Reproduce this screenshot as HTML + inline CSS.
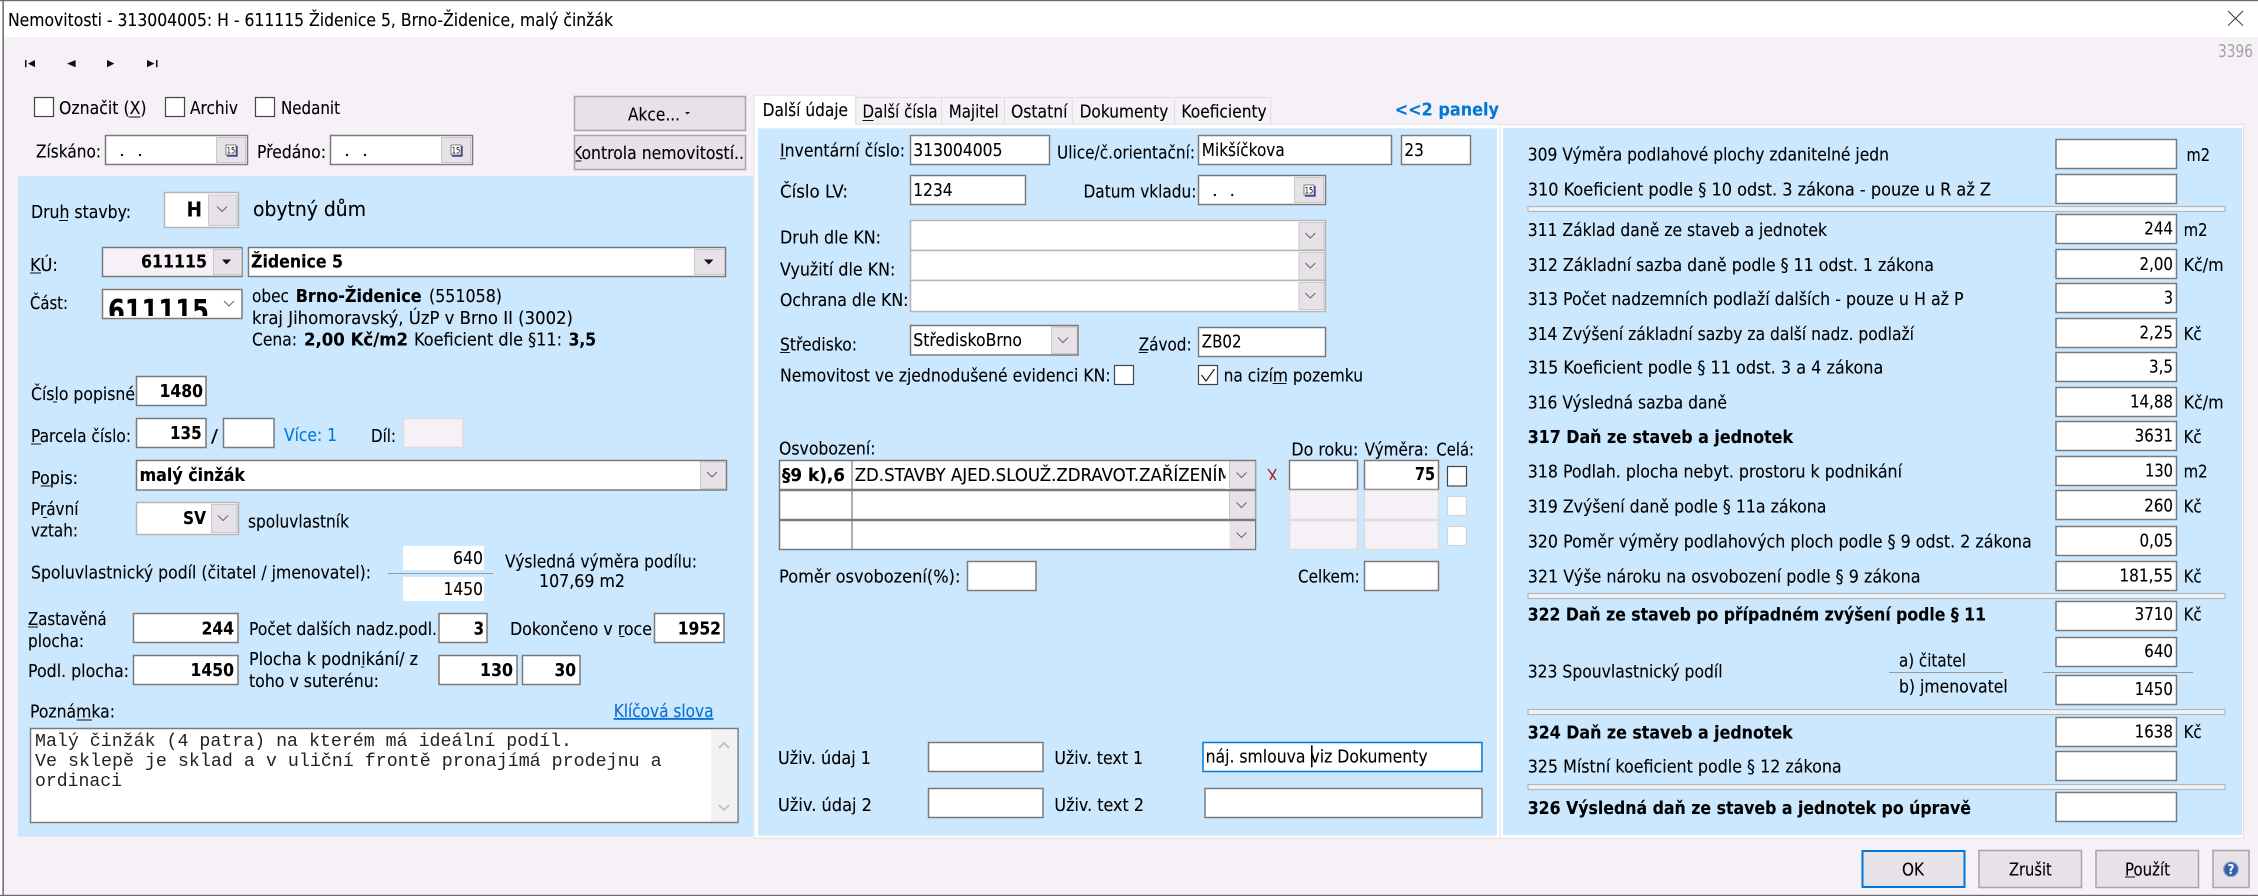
<!DOCTYPE html>
<html lang="cs">
<head>
<meta charset="utf-8">
<title>Nemovitosti</title>
<style>
html,body{margin:0;padding:0;width:2258px;height:896px;overflow:hidden;background:#f5f1f6}
svg{display:block}
text{font-family:"DejaVu Sans","Liberation Sans",sans-serif;font-size:17.5px;fill:#000;stroke:#000;stroke-width:.12}
.B{font-weight:bold}
.L{fill:#0078d7;stroke:#0078d7}
.M{font-family:"Liberation Mono",monospace;font-size:18px;fill:#222;stroke:none}
.i{fill:#fff;stroke:#7a7a7a;stroke-width:1.5}
.li{fill:#fff;stroke:#b4b4b4;stroke-width:1.5}
.d{fill:#f5f1f6;stroke:#dcdcdc;stroke-width:1.5}
.dk{fill:#f5f1f6;stroke:#7a7a7a;stroke-width:1.5}
.c{fill:#fff;stroke:#444;stroke-width:1.2}
.dc{fill:#fff;stroke:#d4d4d4;stroke-width:1.2}
.b{fill:#e6e2e8;stroke:#c8c8c8;stroke-width:1}
.bb{fill:#e6e2e8;stroke:#a6a6a6;stroke-width:1.5}
.ch{fill:none;stroke:#666;stroke-width:1}
.u{fill:#111}
.s{fill:#eef3f8;stroke:#aeb8c2;stroke-width:1.2}
.cal{fill:#fff;stroke:#333;stroke-width:.6}
.n{font-size:8.5px;stroke:none}
</style>
</head>
<body>
<svg xmlns="http://www.w3.org/2000/svg" width="2258" height="896" viewBox="0 0 2258 896">
<defs>
<clipPath id="cp"><rect x="103" y="290" width="110" height="26"/></clipPath>
<clipPath id="ck"><rect x="575.5" y="136" width="169.5" height="33"/></clipPath>
</defs>
<rect width="2258" height="896" fill="#f5f1f6"/>
<!-- title bar -->
<rect width="2258" height="37" fill="#fff"/>
<rect width="2.4" height="896" fill="#fff"/>
<rect width="2258" height="1.2" fill="#6a6a6a"/>
<rect x="2.4" width="1.5" height="896" fill="#6a6a6a"/>
<rect y="894.8" width="2258" height="1.2" fill="#6a6a6a"/>
<text x="8" y="26" textLength="605" lengthAdjust="spacingAndGlyphs">Nemovitosti - 313004005: H - 611115 Židenice 5, Brno-Židenice, malý činžák</text>
<path d="M2228 11L2243 25.7M2243 11L2228 25.7" stroke="#333" stroke-width="1" fill="none"/>
<text x="2218" y="57" textLength="35" lengthAdjust="spacingAndGlyphs" style="fill:#a4a4a4;stroke:none">3396</text>
<!-- nav -->
<path d="M25 60h1.5v7.3H25zM35 60v7.3l-7-3.65zM75.6 60v7.3l-8.5-3.65zM107 60v7.3l7.4-3.65zM147 60v7.3l7.5-3.65zM156 60h1.5v7.3H156z" fill="#111"/>
<!-- top left -->
<rect class="c" x="34.5" y="97.5" width="19" height="19"/>
<text x="59" y="114" textLength="87.5" lengthAdjust="spacingAndGlyphs">Označit (X)</text>
<rect class="u" x="128.5" y="116.5" width="12" height="1"/>
<rect class="c" x="165.5" y="97.5" width="19" height="19"/>
<text x="190" y="114" textLength="48" lengthAdjust="spacingAndGlyphs">Archiv</text>
<rect class="c" x="255.5" y="97.5" width="19" height="19"/>
<text x="281" y="114" textLength="59" lengthAdjust="spacingAndGlyphs">Nedanit</text>
<text x="36" y="157.3" textLength="65" lengthAdjust="spacingAndGlyphs">Získáno:</text>
<rect class="i" x="105.5" y="135.5" width="142" height="29"/>
<rect class="b" x="216.5" y="137.5" width="29" height="25"/>
<rect class="cal" x="226" y="145" width="10" height="10"/><path d="M237 146v10h-10" stroke="#2a2a90" stroke-width="1.2" fill="none"/><text class="n" x="226.8" y="153.5" textLength="8.4" lengthAdjust="spacingAndGlyphs">15</text>
<circle cx="122" cy="155" r="1.2" fill="#111"/><circle cx="140" cy="155" r="1.2" fill="#111"/>
<text x="257" y="158" textLength="69" lengthAdjust="spacingAndGlyphs">Předáno:</text>
<rect class="i" x="330.5" y="135.5" width="142" height="29"/>
<rect class="b" x="441.5" y="137.5" width="29" height="25"/>
<rect class="cal" x="451" y="145" width="10" height="10"/><path d="M462 146v10h-10" stroke="#2a2a90" stroke-width="1.2" fill="none"/><text class="n" x="451.8" y="153.5" textLength="8.4" lengthAdjust="spacingAndGlyphs">15</text>
<circle cx="347" cy="155" r="1.2" fill="#111"/><circle cx="365" cy="155" r="1.2" fill="#111"/>
<rect class="bb" x="574.5" y="96.5" width="171" height="34"/>
<text x="628" y="120.7" textLength="52" lengthAdjust="spacingAndGlyphs">Akce...</text>
<path d="M685 112h5l-2.5 2.5z" fill="#111"/>
<rect class="bb" x="574.5" y="135.5" width="171" height="34"/>
<text x="572" y="159" textLength="172" lengthAdjust="spacingAndGlyphs" clip-path="url(#ck)">Kontrola nemovitostí..</text>
<rect class="u" x="575.5" y="160.5" width="6" height="1"/>

<!-- left panel -->
<rect x="18" y="176" width="735" height="660.7" fill="#cce8ff"/>
<text x="31" y="218" textLength="100" lengthAdjust="spacingAndGlyphs">Druh stavby:</text>
<rect class="u" x="59" y="220" width="9" height="1"/>
<rect class="li" x="164.5" y="192.5" width="74" height="35"/>
<rect class="b" x="208.5" y="195" width="28.5" height="30.5"/>
<text class="B" x="186.6" y="216.7" textLength="15.4" lengthAdjust="spacingAndGlyphs" style="font-size:20px">H</text>
<path class="ch" d="M217 206.5l5 5 5-5"/>
<text x="253" y="216" textLength="113" lengthAdjust="spacingAndGlyphs" style="font-size:20px">obytný dům</text>

<text x="30" y="271" textLength="28" lengthAdjust="spacingAndGlyphs">KÚ:</text>
<rect class="u" x="30" y="272.5" width="11" height="1"/>
<rect class="dk" x="102.5" y="247.5" width="139.5" height="29"/>
<text class="B" x="141" y="267.7" textLength="66" lengthAdjust="spacingAndGlyphs">611115</text>
<rect class="b" x="213.5" y="249.5" width="28" height="25"/>
<path d="M222 259.5h9l-4.5 5z" fill="#111"/>
<rect class="i" x="248.5" y="247.5" width="477" height="29"/>
<text class="B" x="251" y="267.7" textLength="92" lengthAdjust="spacingAndGlyphs">Židenice 5</text>
<rect class="b" x="694.5" y="249.5" width="30" height="25"/>
<path d="M704 259.5h9.5l-4.75 5z" fill="#111"/>

<text x="30" y="309" textLength="38" lengthAdjust="spacingAndGlyphs">Část:</text>
<rect class="li" x="102.5" y="289.5" width="139.5" height="29" style="stroke:#7a7a7a"/>
<text class="B" x="108" y="321" textLength="101" lengthAdjust="spacingAndGlyphs" clip-path="url(#cp)" style="font-size:30px">611115</text>
<path class="ch" d="M224 301l5 5 5-5"/>
<text x="252" y="302" textLength="37" lengthAdjust="spacingAndGlyphs">obec</text>
<text class="B" x="295.7" y="302" textLength="126" lengthAdjust="spacingAndGlyphs">Brno-Židenice</text>
<text x="429" y="302" textLength="73" lengthAdjust="spacingAndGlyphs">(551058)</text>
<text x="252" y="324" textLength="321" lengthAdjust="spacingAndGlyphs">kraj Jihomoravský, ÚzP v Brno II (3002)</text>
<text x="252" y="345.7" textLength="45" lengthAdjust="spacingAndGlyphs">Cena:</text>
<text class="B" x="304" y="345.7" textLength="104" lengthAdjust="spacingAndGlyphs">2,00 Kč/m2</text>
<text x="414" y="345.7" textLength="148" lengthAdjust="spacingAndGlyphs">Koeficient dle §11:</text>
<text class="B" x="568.6" y="345.7" textLength="27.5" lengthAdjust="spacingAndGlyphs">3,5</text>

<text x="31" y="400" textLength="104" lengthAdjust="spacingAndGlyphs">Číslo popisné</text>
<rect class="u" x="53" y="401.5" width="4" height="1"/>
<rect class="i" x="136.5" y="376.5" width="69.5" height="29"/>
<text class="B" x="159.5" y="397" textLength="43.5" lengthAdjust="spacingAndGlyphs">1480</text>

<text x="31" y="442" textLength="100" lengthAdjust="spacingAndGlyphs">Parcela číslo:</text>
<rect class="u" x="31" y="443.5" width="10" height="1"/>
<rect class="i" x="136.5" y="418.5" width="69.5" height="29"/>
<text class="B" x="170" y="439" textLength="31.6" lengthAdjust="spacingAndGlyphs">135</text>
<text x="211" y="442" textLength="7" lengthAdjust="spacingAndGlyphs">/</text>
<rect class="i" x="223.5" y="418.5" width="50.5" height="29"/>
<text class="L" x="284" y="441" textLength="53" lengthAdjust="spacingAndGlyphs">Více: 1</text>
<text x="371" y="442" textLength="25" lengthAdjust="spacingAndGlyphs">Díl:</text>
<rect class="d" x="403.5" y="418.5" width="59.5" height="29"/>

<text x="31" y="484" textLength="47" lengthAdjust="spacingAndGlyphs">Popis:</text>
<rect class="u" x="40.7" y="485.5" width="10" height="1"/>
<rect class="i" x="136.5" y="460.5" width="590" height="29.5"/>
<text class="B" x="139.6" y="481" textLength="105.4" lengthAdjust="spacingAndGlyphs">malý činžák</text>
<rect class="b" x="700.5" y="462" width="25" height="26.5"/>
<path class="ch" d="M707 472l5 5 5-5"/>

<text x="31" y="515" textLength="47.5" lengthAdjust="spacingAndGlyphs">Právní</text>
<rect class="u" x="42.7" y="517" width="4.5" height="1"/>
<text x="31" y="536.7" textLength="47" lengthAdjust="spacingAndGlyphs">vztah:</text>
<rect class="li" x="136.5" y="502.5" width="102" height="32"/>
<text class="B" x="183" y="524" textLength="23" lengthAdjust="spacingAndGlyphs">SV</text>
<rect class="b" x="211.5" y="504.5" width="25.5" height="28"/>
<path class="ch" d="M218 515.5l5 5 5-5"/>
<text x="248" y="527.7" textLength="101" lengthAdjust="spacingAndGlyphs">spoluvlastník</text>

<text x="31" y="578.7" textLength="340" lengthAdjust="spacingAndGlyphs">Spoluvlastnický podíl (čitatel / jmenovatel):</text>
<rect x="403" y="546" width="81" height="24" fill="#fff"/>
<rect x="403" y="577" width="81" height="24" fill="#fff"/>
<rect x="388" y="573" width="105" height="1" fill="#9a9a9a"/>
<text x="453" y="564" textLength="30" lengthAdjust="spacingAndGlyphs">640</text>
<text x="443.5" y="595" textLength="39.5" lengthAdjust="spacingAndGlyphs">1450</text>
<text x="505" y="567.7" textLength="192" lengthAdjust="spacingAndGlyphs">Výsledná výměra podílu:</text>
<text x="539" y="587" textLength="86" lengthAdjust="spacingAndGlyphs">107,69  m2</text>

<text x="28" y="625" textLength="78.6" lengthAdjust="spacingAndGlyphs">Zastavěná</text>
<rect class="u" x="28" y="626.5" width="10" height="1"/>
<text x="28" y="647" textLength="56" lengthAdjust="spacingAndGlyphs">plocha:</text>
<rect class="i" x="133.5" y="613.5" width="104.5" height="29"/>
<text class="B" x="201.6" y="634.3" textLength="32.4" lengthAdjust="spacingAndGlyphs">244</text>
<text x="249" y="635" textLength="188" lengthAdjust="spacingAndGlyphs">Počet dalších nadz.podl.</text>
<rect class="i" x="439" y="613.5" width="48" height="29"/>
<text class="B" x="473.6" y="634.3" textLength="10.4" lengthAdjust="spacingAndGlyphs">3</text>
<text x="510" y="635" textLength="142" lengthAdjust="spacingAndGlyphs">Dokončeno v roce</text>
<rect class="u" x="619.5" y="636" width="5" height="1"/>
<rect class="i" x="654.5" y="613.5" width="69.5" height="29"/>
<text class="B" x="677.7" y="634.3" textLength="43.3" lengthAdjust="spacingAndGlyphs">1952</text>
<text x="28" y="677" textLength="101" lengthAdjust="spacingAndGlyphs">Podl. plocha:</text>
<rect class="i" x="133.5" y="655.5" width="104.5" height="29"/>
<text class="B" x="190.5" y="676" textLength="43.5" lengthAdjust="spacingAndGlyphs">1450</text>
<text x="249" y="665" textLength="169" lengthAdjust="spacingAndGlyphs">Plocha k podnikání/ z</text>
<rect class="u" x="361" y="666.5" width="3.5" height="1"/>
<text x="249" y="687" textLength="130" lengthAdjust="spacingAndGlyphs">toho v suterénu:</text>
<rect class="i" x="439" y="655.5" width="78" height="29"/>
<text class="B" x="480" y="676" textLength="33" lengthAdjust="spacingAndGlyphs">130</text>
<rect class="i" x="522.5" y="655.5" width="57.5" height="29"/>
<text class="B" x="554.5" y="676" textLength="21.5" lengthAdjust="spacingAndGlyphs">30</text>

<text x="30" y="717.7" textLength="85" lengthAdjust="spacingAndGlyphs">Poznámka:</text>
<rect class="u" x="76.6" y="719.5" width="15.4" height="1"/>
<text x="613.7" y="717" textLength="99.8" lengthAdjust="spacingAndGlyphs" style="fill:#0a6ed1;stroke:#0a6ed1;text-decoration:underline">Klíčová slova</text>
<rect class="i" x="30.5" y="728.5" width="707.5" height="94"/>
<rect x="711" y="730" width="26.2" height="91.5" fill="#f4f1f5"/>
<path d="M719 748l5-5 5 5M719 805l5 5 5-5" fill="none" stroke="#c4c4c4" stroke-width="2"/>
<text class="M" x="35" y="746" textLength="537" lengthAdjust="spacingAndGlyphs">Malý činžák (4 patra) na kterém má ideální podíl.</text>
<text class="M" x="35" y="766" textLength="626.6" lengthAdjust="spacingAndGlyphs">Ve sklepě je sklad a v uliční frontě pronajímá prodejnu a</text>
<text class="M" x="35" y="786" textLength="87" lengthAdjust="spacingAndGlyphs">ordinaci</text>

<!-- tabs -->
<rect x="855.7" y="97.5" width="415" height="27" fill="#f5f1f6" stroke="#dedede" stroke-width="1"/>
<path d="M941.5 97.5v27M1004.5 97.5v27M1072.3 97.5v27M1174.6 97.5v27" stroke="#dedede" stroke-width="1" fill="none"/>
<rect x="754" y="124.2" width="746.5" height="714" fill="#fff" stroke="#e0e0e0" stroke-width="1"/>
<rect x="754" y="95.3" width="101.7" height="30" fill="#fff"/>
<path d="M754 125V95.3H855.7V125" stroke="#e0e0e0" fill="none" stroke-width="1"/>
<text x="762.6" y="116" textLength="85.4" lengthAdjust="spacingAndGlyphs">Další údaje</text>
<text x="862.5" y="117.7" textLength="75.1" lengthAdjust="spacingAndGlyphs">Další čísla</text>
<rect class="u" x="862.5" y="120" width="11" height="1"/>
<text x="948.7" y="117.7" textLength="50" lengthAdjust="spacingAndGlyphs">Majitel</text>
<text x="1011" y="117.7" textLength="56.5" lengthAdjust="spacingAndGlyphs">Ostatní</text>
<text x="1079.6" y="117.7" textLength="88.7" lengthAdjust="spacingAndGlyphs">Dokumenty</text>
<text x="1181.4" y="117.7" textLength="85.3" lengthAdjust="spacingAndGlyphs">Koeficienty</text>
<text class="B L" x="1394.7" y="115.7" textLength="104.3" lengthAdjust="spacingAndGlyphs">&lt;&lt;2 panely</text>

<!-- middle panel -->
<rect x="758" y="128.3" width="739" height="707.4" fill="#cce8ff"/>
<text x="780" y="156.7" textLength="125" lengthAdjust="spacingAndGlyphs">Inventární číslo:</text>
<rect class="u" x="780" y="158.2" width="6" height="1"/>
<rect class="i" x="910.5" y="135.5" width="139" height="29"/>
<text x="913.3" y="156" textLength="89.2" lengthAdjust="spacingAndGlyphs">313004005</text>
<text x="1057" y="158.7" textLength="138" lengthAdjust="spacingAndGlyphs">Ulice/č.orientační:</text>
<rect class="i" x="1198.5" y="135.5" width="193" height="29"/>
<text x="1201.8" y="156" textLength="82.9" lengthAdjust="spacingAndGlyphs">Mikšíčkova</text>
<rect class="i" x="1401.5" y="135.5" width="69" height="29"/>
<text x="1404.4" y="156" textLength="19.4" lengthAdjust="spacingAndGlyphs">23</text>

<text x="780" y="197.7" textLength="68" lengthAdjust="spacingAndGlyphs">Číslo LV:</text>
<rect class="i" x="910.5" y="175.5" width="115" height="29"/>
<text x="913.3" y="196" textLength="39.3" lengthAdjust="spacingAndGlyphs">1234</text>
<text x="1083.5" y="197.7" textLength="112.9" lengthAdjust="spacingAndGlyphs">Datum vkladu:</text>
<rect class="i" x="1198.5" y="175.5" width="127" height="29"/>
<rect class="b" x="1294.5" y="177.5" width="29" height="25"/>
<rect class="cal" x="1304" y="185" width="10" height="10"/><path d="M1315 186v10h-10" stroke="#2a2a90" stroke-width="1.2" fill="none"/><text class="n" x="1304.8" y="193.5" textLength="8.4" lengthAdjust="spacingAndGlyphs">15</text>
<circle cx="1214.9" cy="195" r="1.2" fill="#111"/><circle cx="1232.3" cy="195" r="1.2" fill="#111"/>

<text x="780" y="243.3" textLength="101" lengthAdjust="spacingAndGlyphs">Druh dle KN:</text>
<text x="780" y="275.3" textLength="115.4" lengthAdjust="spacingAndGlyphs">Využití dle KN:</text>
<text x="780" y="306" textLength="128.5" lengthAdjust="spacingAndGlyphs">Ochrana dle KN:</text>
<rect class="li" x="910.5" y="220.5" width="415" height="30"/>
<rect class="li" x="910.5" y="250.5" width="415" height="30"/>
<rect class="li" x="910.5" y="280.5" width="415" height="31"/>
<rect class="b" x="1299" y="222.5" width="25" height="27"/>
<rect class="b" x="1299" y="252.5" width="25" height="27"/>
<rect class="b" x="1299" y="282.5" width="25" height="27"/>
<path class="ch" d="M1305.3 233l5 5 5-5M1305.3 263l5 5 5-5M1305.3 293l5 5 5-5"/>

<text x="780" y="350.7" textLength="77" lengthAdjust="spacingAndGlyphs">Středisko:</text>
<rect class="u" x="780" y="352" width="10" height="1"/>
<rect class="i" x="910.5" y="325.5" width="167.5" height="29.5"/>
<text x="913.3" y="346" textLength="108.7" lengthAdjust="spacingAndGlyphs">StřediskoBrno</text>
<rect class="b" x="1051.5" y="327" width="25.5" height="26.5"/>
<path class="ch" d="M1058 337.5l5 5 5-5"/>
<text x="1138.7" y="350.7" textLength="52.9" lengthAdjust="spacingAndGlyphs">Závod:</text>
<rect class="u" x="1138.7" y="352" width="9" height="1"/>
<rect class="i" x="1198.5" y="327.5" width="127" height="29"/>
<text x="1201.8" y="347.7" textLength="39.7" lengthAdjust="spacingAndGlyphs">ZB02</text>

<text x="780" y="381.7" textLength="330.6" lengthAdjust="spacingAndGlyphs">Nemovitost ve zjednodušené evidenci KN:</text>
<rect class="c" x="1114.5" y="365.5" width="19" height="19"/>
<rect class="c" x="1198.5" y="365.5" width="19" height="19"/>
<path d="M1201.5 375l4.5 6 8.5-12" fill="none" stroke="#222" stroke-width="1.2"/>
<text x="1223.6" y="381.7" textLength="139.4" lengthAdjust="spacingAndGlyphs">na cizím pozemku</text>
<rect class="u" x="1272.5" y="383" width="14" height="1"/>

<!-- osvobozeni -->
<rect x="768.5" y="427.5" width="725" height="181" fill="none" stroke="#d4e2ec" stroke-width="1"/>
<text x="779" y="454.3" textLength="96.5" lengthAdjust="spacingAndGlyphs">Osvobození:</text>
<text x="1291.4" y="455.7" textLength="66.9" lengthAdjust="spacingAndGlyphs">Do roku:</text>
<text x="1364.6" y="455.7" textLength="64" lengthAdjust="spacingAndGlyphs">Výměra:</text>
<text x="1436.4" y="455.7" textLength="37.6" lengthAdjust="spacingAndGlyphs">Celá:</text>
<rect class="i" x="779.5" y="460.5" width="476" height="29"/>
<rect class="i" x="779.5" y="490.5" width="476" height="29"/>
<rect class="i" x="779.5" y="520.5" width="476" height="29"/>
<path d="M852 460.5v89" stroke="#7a7a7a" stroke-width="1.2" fill="none"/>
<text class="B" x="782" y="481" textLength="63" lengthAdjust="spacingAndGlyphs">§9 k),6</text>
<text x="854.7" y="481" textLength="377" lengthAdjust="spacingAndGlyphs">ZD.STAVBY AJED.SLOUŽ.ZDRAVOT.ZAŘÍZENÍM</text>
<rect x="1225.5" y="462" width="4" height="27" fill="#fff"/>
<rect class="b" x="1229.5" y="461.5" width="25.5" height="27"/>
<rect class="b" x="1229.5" y="491.5" width="25.5" height="27"/>
<rect x="1229.5" y="521.5" width="25.5" height="27" fill="#e6e2e8"/>
<path class="ch" d="M1236.5 472.5l5 5 5-5M1236.5 502.5l5 5 5-5M1236.5 532.5l5 5 5-5"/>
<path d="M1268 469l8 11M1276 469l-6 11" stroke="#a82020" stroke-width="1.4" fill="none"/>
<rect class="i" x="1289.5" y="460.5" width="68" height="29"/>
<rect class="i" x="1364.5" y="460.5" width="74" height="29"/>
<text class="B" x="1415" y="480" textLength="20" lengthAdjust="spacingAndGlyphs">75</text>
<rect class="c" x="1447.5" y="466.5" width="19" height="19.5"/>
<rect class="d" x="1289.5" y="490.5" width="68" height="29"/>
<rect class="d" x="1364.5" y="490.5" width="74" height="29"/>
<rect class="d" x="1289.5" y="520.5" width="68" height="29"/>
<rect class="d" x="1364.5" y="520.5" width="74" height="29"/>
<rect class="dc" x="1447.5" y="496.5" width="19" height="19"/>
<rect class="dc" x="1447.5" y="526.5" width="19" height="19"/>
<text x="779" y="582.7" textLength="181.4" lengthAdjust="spacingAndGlyphs">Poměr osvobození(%):</text>
<rect class="i" x="967.5" y="561.5" width="68.5" height="29"/>
<text x="1298" y="582.7" textLength="61.8" lengthAdjust="spacingAndGlyphs">Celkem:</text>
<rect class="i" x="1364.5" y="561.5" width="74" height="29"/>

<text x="778" y="764" textLength="93" lengthAdjust="spacingAndGlyphs">Uživ. údaj 1</text>
<rect class="i" x="928.5" y="742.5" width="114.5" height="29"/>
<text x="1054.4" y="764" textLength="88.6" lengthAdjust="spacingAndGlyphs">Uživ. text 1</text>
<rect class="i" x="1203" y="742.5" width="279" height="29" style="stroke:#0078d7"/>
<text x="1205.6" y="762.7" textLength="222" lengthAdjust="spacingAndGlyphs">náj. smlouva viz Dokumenty</text>
<rect x="1311" y="745.3" width="1.6" height="22" fill="#000"/>
<text x="778" y="811" textLength="94" lengthAdjust="spacingAndGlyphs">Uživ. údaj 2</text>
<rect class="i" x="928.5" y="788.5" width="114.5" height="29"/>
<text x="1054.4" y="811" textLength="89.6" lengthAdjust="spacingAndGlyphs">Uživ. text 2</text>
<rect class="i" x="1205" y="788.5" width="277" height="29"/>

<!-- right panel -->
<rect x="1500" y="124.5" width="743.5" height="713.8" fill="#fff" stroke="#e0e0e0" stroke-width="1"/>
<rect x="1503" y="128" width="739" height="707" fill="#cce8ff"/>

<text x="1527.7" y="160.7" textLength="361.3" lengthAdjust="spacingAndGlyphs">309 Výměra podlahové plochy zdanitelné jedn</text>
<rect class="i" x="2056" y="139.5" width="120.5" height="29"/>
<text x="2186.5" y="161" textLength="23.5" lengthAdjust="spacingAndGlyphs">m2</text>

<text x="1527.7" y="195.7" textLength="463.3" lengthAdjust="spacingAndGlyphs">310 Koeficient podle § 10 odst. 3 zákona - pouze u R až Z</text>
<rect class="i" x="2056" y="174.5" width="120.5" height="29"/>
<rect class="s" x="1528" y="206.5" width="697" height="5"/>

<text x="1527.7" y="236" textLength="299.3" lengthAdjust="spacingAndGlyphs">311 Základ daně ze staveb a jednotek</text>
<rect class="i" x="2056" y="214.5" width="120.5" height="29"/>
<text x="2144.3" y="234.7" textLength="28.7" lengthAdjust="spacingAndGlyphs">244</text>
<text x="2183.6" y="236" textLength="24" lengthAdjust="spacingAndGlyphs">m2</text>

<text x="1527.7" y="271" textLength="406.3" lengthAdjust="spacingAndGlyphs">312 Základní sazba daně podle § 11 odst. 1 zákona</text>
<rect class="i" x="2056" y="249.5" width="120.5" height="29"/>
<text x="2139.5" y="270" textLength="33.5" lengthAdjust="spacingAndGlyphs">2,00</text>
<text x="2183.6" y="271" textLength="40" lengthAdjust="spacingAndGlyphs">Kč/m</text>

<text x="1527.7" y="305" textLength="435.9" lengthAdjust="spacingAndGlyphs">313 Počet nadzemních podlaží dalších - pouze u H až P</text>
<rect class="i" x="2056" y="283.5" width="120.5" height="29"/>
<text x="2164" y="303.7" textLength="9" lengthAdjust="spacingAndGlyphs">3</text>

<text x="1527.7" y="340" textLength="386.3" lengthAdjust="spacingAndGlyphs">314 Zvýšení základní sazby za další nadz. podlaží</text>
<rect class="i" x="2056" y="318.5" width="120.5" height="29"/>
<text x="2139.5" y="338.7" textLength="33.5" lengthAdjust="spacingAndGlyphs">2,25</text>
<text x="2183.6" y="340" textLength="18.1" lengthAdjust="spacingAndGlyphs">Kč</text>

<text x="1527.7" y="373.7" textLength="355.6" lengthAdjust="spacingAndGlyphs">315 Koeficient podle § 11 odst. 3 a 4 zákona</text>
<rect class="i" x="2056" y="352.5" width="120.5" height="29"/>
<text x="2149" y="372.7" textLength="24" lengthAdjust="spacingAndGlyphs">3,5</text>

<text x="1527.7" y="408.7" textLength="199.3" lengthAdjust="spacingAndGlyphs">316 Výsledná sazba daně</text>
<rect class="i" x="2056" y="387.5" width="120.5" height="29"/>
<text x="2130" y="407.7" textLength="43" lengthAdjust="spacingAndGlyphs">14,88</text>
<text x="2183.6" y="408.7" textLength="40" lengthAdjust="spacingAndGlyphs">Kč/m</text>

<text class="B" x="1527.7" y="443" textLength="265.3" lengthAdjust="spacingAndGlyphs">317 Daň ze staveb a jednotek</text>
<rect class="i" x="2056" y="421.5" width="120.5" height="29"/>
<text x="2134.6" y="441.7" textLength="38.4" lengthAdjust="spacingAndGlyphs">3631</text>
<text x="2183.6" y="443" textLength="18.1" lengthAdjust="spacingAndGlyphs">Kč</text>

<text x="1527.7" y="477.7" textLength="374.3" lengthAdjust="spacingAndGlyphs">318 Podlah. plocha nebyt. prostoru k podnikání</text>
<rect class="i" x="2056" y="456.5" width="120.5" height="29"/>
<text x="2145" y="476.7" textLength="28" lengthAdjust="spacingAndGlyphs">130</text>
<text x="2183.6" y="477.7" textLength="24" lengthAdjust="spacingAndGlyphs">m2</text>

<text x="1527.7" y="512.7" textLength="298.8" lengthAdjust="spacingAndGlyphs">319 Zvýšení daně podle § 11a zákona</text>
<rect class="i" x="2056" y="490.5" width="120.5" height="29"/>
<text x="2144.3" y="511.3" textLength="28.7" lengthAdjust="spacingAndGlyphs">260</text>
<text x="2183.6" y="512.7" textLength="18.1" lengthAdjust="spacingAndGlyphs">Kč</text>

<text x="1527.7" y="547.7" textLength="504" lengthAdjust="spacingAndGlyphs">320 Poměr výměry podlahových ploch podle § 9 odst. 2 zákona</text>
<rect class="i" x="2056" y="526.5" width="120.5" height="29"/>
<text x="2139.5" y="546.7" textLength="33.5" lengthAdjust="spacingAndGlyphs">0,05</text>

<text x="1527.7" y="582.7" textLength="392.8" lengthAdjust="spacingAndGlyphs">321 Výše nároku na osvobození podle § 9 zákona</text>
<rect class="i" x="2056" y="561.5" width="120.5" height="29"/>
<text x="2119.4" y="581.7" textLength="53.6" lengthAdjust="spacingAndGlyphs">181,55</text>
<text x="2183.6" y="582.7" textLength="18.1" lengthAdjust="spacingAndGlyphs">Kč</text>
<rect class="s" x="1528" y="593.5" width="697" height="5"/>

<text class="B" x="1527.7" y="620.7" textLength="458.3" lengthAdjust="spacingAndGlyphs">322 Daň ze staveb po případném zvýšení podle § 11</text>
<rect class="i" x="2056" y="601.5" width="120.5" height="29"/>
<text x="2134.6" y="620" textLength="38.4" lengthAdjust="spacingAndGlyphs">3710</text>
<text x="2183.6" y="620.7" textLength="18.1" lengthAdjust="spacingAndGlyphs">Kč</text>

<text x="1527.7" y="677.7" textLength="194.9" lengthAdjust="spacingAndGlyphs">323 Spouvlastnický podíl</text>
<text x="1899" y="666.7" textLength="67" lengthAdjust="spacingAndGlyphs">a) čitatel</text>
<rect x="1889" y="672" width="114" height="1" fill="#9a9a9a"/>
<rect x="2043" y="672" width="150" height="1" fill="#9a9a9a"/>
<text x="1899" y="692.7" textLength="108.7" lengthAdjust="spacingAndGlyphs">b) jmenovatel</text>
<rect class="i" x="2056" y="637.5" width="120.5" height="29"/>
<text x="2144.3" y="657" textLength="28.7" lengthAdjust="spacingAndGlyphs">640</text>
<rect class="i" x="2056" y="675.5" width="120.5" height="29"/>
<text x="2134.6" y="695" textLength="38.4" lengthAdjust="spacingAndGlyphs">1450</text>
<rect class="s" x="1528" y="709.5" width="697" height="5"/>

<text class="B" x="1527.7" y="738.7" textLength="265" lengthAdjust="spacingAndGlyphs">324 Daň ze staveb a jednotek</text>
<rect class="i" x="2056" y="717.5" width="120.5" height="29"/>
<text x="2134.6" y="737.3" textLength="38.4" lengthAdjust="spacingAndGlyphs">1638</text>
<text x="2183.6" y="738" textLength="18.1" lengthAdjust="spacingAndGlyphs">Kč</text>

<text x="1527.7" y="772.7" textLength="314" lengthAdjust="spacingAndGlyphs">325 Místní koeficient podle § 12 zákona</text>
<rect class="i" x="2056" y="751.5" width="120.5" height="29"/>
<rect class="s" x="1528" y="784.5" width="697" height="5"/>

<text class="B" x="1527.7" y="814" textLength="443.3" lengthAdjust="spacingAndGlyphs">326 Výsledná daň ze staveb a jednotek po úpravě</text>
<rect class="i" x="2056" y="792.5" width="120.5" height="29"/>

<!-- buttons -->
<rect x="1862.5" y="851" width="102" height="36" fill="#e6e2e8" stroke="#0078d7" stroke-width="2"/>
<text x="1902" y="875.3" textLength="22" lengthAdjust="spacingAndGlyphs">OK</text>
<rect class="bb" x="1979" y="850.5" width="102.5" height="37"/>
<text x="2009" y="875.3" textLength="42.8" lengthAdjust="spacingAndGlyphs">Zrušit</text>
<rect class="bb" x="2096" y="850.5" width="102.5" height="37"/>
<text x="2125" y="875.3" textLength="45" lengthAdjust="spacingAndGlyphs">Použít</text>
<rect class="u" x="2125" y="876.5" width="10" height="1"/>
<rect class="bb" x="2213" y="850.5" width="36" height="37"/>
<circle cx="2231" cy="869.3" r="7.2" fill="#2f5fb0" stroke="#8a9ab8" stroke-width="1.2"/>
<text x="2227.5" y="874" textLength="7" lengthAdjust="spacingAndGlyphs" style="font-size:13px;font-weight:bold;fill:#fff;stroke:none">?</text>
</svg>
</body>
</html>
